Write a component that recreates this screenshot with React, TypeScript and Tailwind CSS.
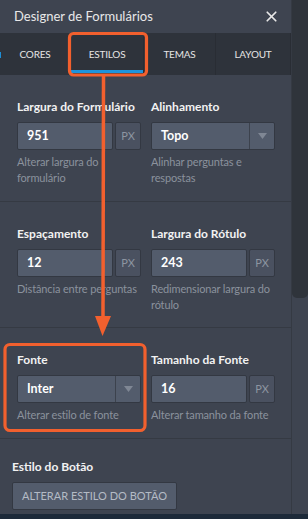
import { X } from "lucide-react"

const tabs = [
  { label: "CORES", w: "w-[71px]" },
  { label: "ESTILOS", w: "w-[73px]", active: true },
  { label: "TEMAS", w: "w-[72px]" },
  { label: "LAYOUT", w: "w-[75px]" },
]

function Label({ children }: { children: React.ReactNode }) {
  return <p className="whitespace-nowrap text-[12px] font-bold leading-[14px] text-[#f2f2f2]">{children}</p>
}

function Help({ children }: { children: React.ReactNode }) {
  return <p className="mt-[4px] text-[11px] leading-[16px] tracking-[-0.15px] text-[#8b929d]">{children}</p>
}

function PxInput({ value }: { value: string }) {
  return (
    <div className="mt-[8px] flex h-[28px] gap-[2px]">
      <div className="flex flex-1 items-center rounded-[2px] border border-[#333842] bg-[#535c6c] pl-[9px] text-[12.5px] font-bold text-white">
        {value}
      </div>
      <div className="flex w-[26px] items-center justify-center rounded-[2px] border border-[#333842] bg-[#4a5160] text-[11px] text-[#8d95a1]">
        PX
      </div>
    </div>
  )
}

function SelectBox({ value }: { value: string }) {
  return (
    <div className="mt-[8px] flex h-[28px] rounded-[2px] border border-[#333842] bg-[#535c6c]">
      <div className="flex flex-1 items-center pl-[9px] text-[12.5px] font-bold text-white">{value}</div>
      <div className="flex w-[25px] items-center justify-center border-l border-[#3c424d]">
        <svg width="9" height="6" viewBox="0 0 9 6">
          <path d="M0 0h9L4.5 6z" fill="#7f8794" />
        </svg>
      </div>
    </div>
  )
}

function Field({ label, children, help }: { label: string; children: React.ReactNode; help: string }) {
  return (
    <div>
      <Label>{label}</Label>
      {children}
      <Help>{help}</Help>
    </div>
  )
}

export default function App() {
  return (
    <div className="relative h-[519px] w-[308px] overflow-hidden bg-[#3e4450] font-['Lato',sans-serif]">
      <div className="flex h-[514px]">
        <div className="flex w-[292px] flex-col border-r border-[#353a43]">
          {/* header */}
          <div className="flex h-[33px] shrink-0 items-center justify-between pl-[14px] pr-[11px]">
            <span className="text-[13px] leading-none text-[#e8e8e8]">Designer de Formulários</span>
            <X size={17} strokeWidth={2.4} className="text-[#e8e8e8]" />
          </div>

          {/* tabs */}
          <div className="relative flex h-[42px] shrink-0 bg-[#2e333b]">
            <div className="absolute left-0 top-[19px] h-[6px] w-[1px] bg-[#1e8fd6]" />
            {tabs.map((t) => (
              <div
                key={t.label}
                className={`relative flex ${t.w} items-center justify-center border-r border-[#292d34] text-[10px] tracking-[-0.2px] text-[#e4e4e4]`}
              >
                {t.label}
                {t.active && <div className="absolute bottom-[2px] left-0 right-0 h-[3px] bg-[#1d93dc]" />}
              </div>
            ))}
          </div>

          {/* section 1 */}
          <div className="grid shrink-0 grid-cols-2 gap-[10px] border-b border-[#353a43] pb-[15px] pl-[17px] pr-[16px] pt-[25px]">
            <Field label="Largura do Formulário" help="Alterar largura do formulário">
              <PxInput value="951" />
            </Field>
            <Field label="Alinhamento" help="Alinhar perguntas e respostas">
              <SelectBox value="Topo" />
            </Field>
          </div>

          {/* section 2 */}
          <div className="grid shrink-0 grid-cols-2 gap-[10px] border-b border-[#353a43] pb-[14px] pl-[17px] pr-[16px] pt-[25px]">
            <Field label="Espaçamento" help="Distância entre perguntas">
              <PxInput value="12" />
            </Field>
            <Field label="Largura do Rótulo" help="Redimensionar largura do rótulo">
              <PxInput value="243" />
            </Field>
          </div>

          {/* section 3 */}
          <div className="grid shrink-0 grid-cols-2 gap-[10px] border-b border-[#353a43] pb-[15px] pl-[17px] pr-[16px] pt-[25px]">
            <Field label="Fonte" help="Alterar estilo de fonte">
              <SelectBox value="Inter" />
            </Field>
            <Field label="Tamanho da Fonte" help="Alterar tamanho da fonte">
              <PxInput value="16" />
            </Field>
          </div>

          {/* section 4 */}
          <div className="pl-[12px] pt-[21px]">
            <Label>Estilo do Botão</Label>
            <button className="mt-[8px] h-[28px] w-[165px] whitespace-nowrap rounded-[2px] border border-[#333842] bg-[#535c6c] text-[11px] text-[#b4bbc5]">
              ALTERAR ESTILO DO BOTÃO
            </button>
          </div>
        </div>

        {/* scrollbar */}
        <div className="flex-1">
          <div className="h-[298px] rounded-b-[5px] bg-[#2f343b]" />
        </div>
      </div>
      <div className="h-[5px] bg-[#1d2a39]" />

      {/* annotations */}
      <svg className="pointer-events-none absolute left-0 top-0" width="308" height="519" viewBox="0 0 308 519">
        <rect x="69.5" y="33.5" width="77" height="41.5" rx="4" fill="none" stroke="#f2602e" strokeWidth="3.2" />
        <rect x="5" y="344.5" width="140" height="86" rx="5" fill="none" stroke="#f2602e" strokeWidth="3.2" />
        <line x1="103.5" y1="76" x2="103" y2="320" stroke="#f2602e" strokeWidth="3.5" />
        <path d="M95 316h16l-8.5 20z" fill="#f2602e" />
      </svg>
    </div>
  )
}
